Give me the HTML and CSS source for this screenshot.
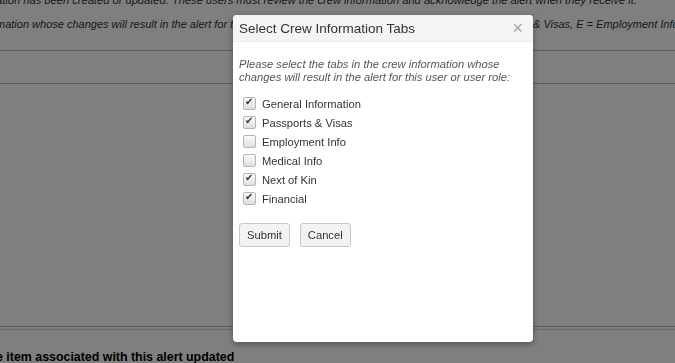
FILE: index.html
```html
<!DOCTYPE html>
<html lang="en">
<head>
    <meta charset="UTF-8">
    <meta name="viewport" content="width=device-width, initial-scale=1.0">
    <title>Crew Alerts</title>
    <link rel="stylesheet" href="styles.css">
</head>
<body>
    <div class="page">
        <p class="note note-top">ation has been created or updated. These users must review the crew information and acknowledge the alert when they receive it.</p>
        <p class="note">mation whose changes will result in the alert for this user or user role (G = General Information, P = Passports &amp; Visas, E = Employment Info, M = Medical Info)</p>
        <div class="rule rule-one"></div>
        <div class="rule rule-two"></div>
        <div class="rule-double"></div>
        <p class="bold-line">e item associated with this alert updated</p>
    </div>

    <div class="overlay"></div>

    <div class="modal">
        <div class="modal-header">
            <span class="modal-title">Select Crew Information Tabs</span>
            <span class="modal-close">&times;</span>
        </div>
        <div class="modal-body">
            <p class="hint">Please select the tabs in the crew information whose changes will result in the alert for this user or user role:</p>
            <ul class="tabs">
                <li><label><input type="checkbox" checked> General Information</label></li>
                <li><label><input type="checkbox" checked> Passports &amp; Visas</label></li>
                <li><label><input type="checkbox"> Employment Info</label></li>
                <li><label><input type="checkbox"> Medical Info</label></li>
                <li><label><input type="checkbox" checked> Next of Kin</label></li>
                <li><label><input type="checkbox" checked> Financial</label></li>
            </ul>
            <div class="actions">
                <button type="button">Submit</button>
                <button type="button">Cancel</button>
            </div>
        </div>
    </div>
</body>
</html>
```

FILE: styles.css
```css
*{
    margin: 0;
    padding: 0;
    box-sizing: border-box;
    font-family: "Liberation Sans", Arial, Helvetica, sans-serif;
}
body{
    background-color: white;
    overflow: hidden;
}
.page{
    margin-left: -4px;
    color: #333;
}
.note{
    font-size: 11px;
    font-style: italic;
    line-height: 16px;
    white-space: nowrap;
}
.note-top{
    margin-top: -8px;
    margin-bottom: 8px;
    font-size: 11.15px;
}
.rule{
    border-top: 1px solid #bdbdbd;
    margin-left: 4px;
}
.rule-one{
    margin-top: 18px;
}
.rule-two{
    margin-top: 32px;
}
.rule-double{
    margin-top: 242px;
    margin-left: 4px;
    height: 4px;
    border-top: 1px solid #bdbdbd;
    border-bottom: 1px solid #d6d6d6;
}
.bold-line{
    margin-top: 19px;
    font-size: 12.4px;
    font-weight: bold;
    color: #000;
    line-height: 16px;
}
.overlay{
    position: fixed;
    inset: 0;
    background-color: rgba(0, 0, 0, 0.5);
}
.modal{
    position: fixed;
    left: 233px;
    top: 15px;
    width: 300px;
    height: 327px;
    background-color: white;
    border-radius: 4px;
    box-shadow: 0 2px 6px rgba(0, 0, 0, 0.35);
    overflow: hidden;
}
.modal-header{
    display: flex;
    justify-content: space-between;
    align-items: center;
    height: 27px;
    padding: 0 10px 0 6px;
    background-color: #f4f4f4;
    border-bottom: 1px solid #ececec;
}
.modal-title{
    font-size: 13.5px;
    color: #333;
}
.modal-close{
    font-size: 18px;
    color: #a0a0a0;
}
.modal-body{
    padding: 16px 6px 6px;
}
.hint{
    font-size: 11.2px;
    font-style: italic;
    color: #555;
    line-height: 13px;
}
.tabs{
    list-style: none;
    margin-top: 10px;
}
.tabs li{
    height: 19px;
    display: flex;
    align-items: center;
}
.tabs label{
    display: flex;
    align-items: center;
    font-size: 11.2px;
    color: #333;
}
.tabs input{
    appearance: none;
    width: 13px;
    height: 13px;
    margin: 0 6px 0 4px;
    border: 1px solid #b5b5b5;
    border-radius: 2px;
    background: linear-gradient(#fbfbfb, #dedede);
    position: relative;
}
.tabs input:checked::after{
    content: "\2714";
    position: absolute;
    left: 1px;
    top: -2px;
    font-size: 10px;
    color: #333;
    font-family: "DejaVu Sans", sans-serif;
}
.actions{
    display: flex;
    gap: 10px;
    margin-top: 15px;
}
.actions button{
    height: 24px;
    padding: 0 7px;
    font-size: 11.2px;
    color: #333;
    background-color: #f3f3f3;
    border: 1px solid #c8c8c8;
    border-radius: 3px;
}
```
